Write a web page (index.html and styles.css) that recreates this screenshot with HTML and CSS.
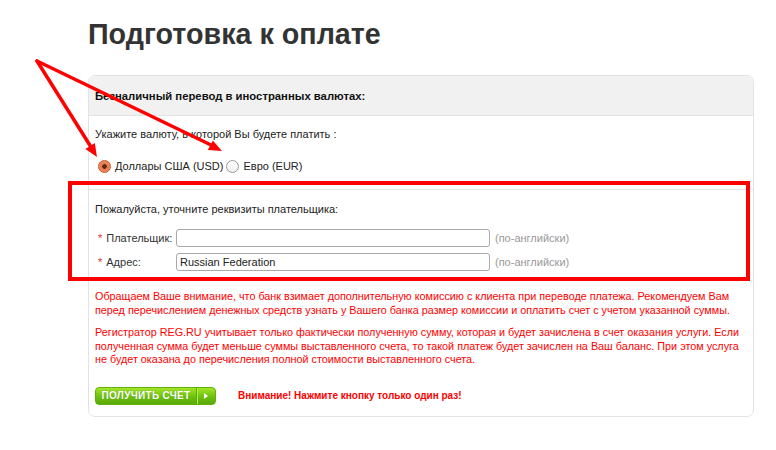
FILE: index.html
```html
<!DOCTYPE html>
<html lang="ru">
<head>
  <meta charset="UTF-8">
  <title>Подготовка к оплате</title>
  <link rel="stylesheet" href="styles.css">
</head>
<body>
  <div class="page">
    <h1 class="title">Подготовка к оплате</h1>

    <div class="panel">
      <div class="panel-head">Безналичный перевод в иностранных валютах:</div>

      <div class="section currency">
        <p class="line">Укажите валюту, в которой Вы будете платить :</p>
        <div class="radios">
          <label class="radio"><span class="dot checked"></span>Доллары США (USD)</label>
          <label class="radio"><span class="dot"></span>Евро (EUR)</label>
        </div>
      </div>

      <div class="section payer">
        <p class="line">Пожалуйста, уточните реквизиты плательщика:</p>
        <div class="fields">
          <label class="field-label"><span class="req">*</span>Плательщик:</label>
          <input class="field" type="text" value="">
          <span class="hint">(по-английски)</span>

          <label class="field-label"><span class="req">*</span>Адрес:</label>
          <input class="field" type="text" value="Russian Federation">
          <span class="hint">(по-английски)</span>
        </div>

        <p class="notice">Обращаем Ваше внимание, что банк взимает дополнительную комиссию с клиента при переводе платежа. Рекомендуем Вам перед перечислением денежных средств узнать у Вашего банка размер комиссии и оплатить счет с учетом указанной суммы.</p>
        <p class="notice">Регистратор REG.RU учитывает только фактически полученную сумму, которая и будет зачислена в счет оказания услуги. Если полученная сумма будет меньше суммы выставленного счета, то такой платеж будет зачислен на Ваш баланс. При этом услуга не будет оказана до перечисления полной стоимости выставленного счета.</p>

        <div class="actions">
          <button class="btn-green" type="button"><span class="btn-text">ПОЛУЧИТЬ СЧЕТ</span><span class="btn-arrow"></span></button>
          <span class="warn">Внимание! Нажмите кнопку только один раз!</span>
        </div>
      </div>
    </div>

    <!-- пометки поверх скриншота -->
    <div class="mark-box"></div>
    <svg class="marks" width="776" height="450" viewBox="0 0 776 450">
      <g stroke="#f00" stroke-width="3.5" stroke-linecap="round" fill="none">
        <line x1="37" y1="61" x2="91" y2="147"/>
        <line x1="37" y1="61" x2="211" y2="145"/>
      </g>
      <g fill="#f00">
        <polygon points="97,157 94.8,143 85.4,148.9"/>
        <polygon points="222,151 212.8,140.5 207.8,150.1"/>
      </g>
    </svg>
  </div>
</body>
</html>
```

FILE: styles.css
```css
body { margin: 0; font-family: "Liberation Sans", Arial, sans-serif; font-size: 11px; color: #222; background: #fff; }
.page { position: relative; width: 776px; height: 450px; padding-left: 88px; box-sizing: border-box; overflow: hidden; }

.title { margin: 0; padding-top: 16px; height: 75px; box-sizing: border-box; font-size: 28.7px; line-height: 36px; font-weight: bold; color: #333; }

.panel { width: 666px; border: 1px solid #e3e3e3; border-radius: 7px; box-sizing: border-box; }
.panel-head { height: 40px; line-height: 40px; padding-left: 6px; background: #f1f1f1; border-bottom: 1px solid #e3e3e3; border-radius: 7px 7px 0 0; font-weight: bold; font-size: 11.3px; color: #111; box-sizing: border-box; }

.section { padding: 0 6px; }
.line { margin: 0; line-height: 16px; }

.currency { padding-top: 10px; padding-bottom: 15px; border-bottom: 1px solid #e5e5e5; }
.radios { display: flex; margin-top: 16px; line-height: 16px; }
.radio { display: flex; align-items: center; }
.dot { width: 11px; height: 11px; margin: 0 4px 0 3px; border: 1px solid #999; border-radius: 50%; background: linear-gradient(#fff, #eee); }
.dot.checked { border-color: #c9532a; background: radial-gradient(circle, #5a2a15 0 2px, #e8774c 2.5px, #f29a72 100%); }

.payer { padding-top: 11px; padding-bottom: 11px; }
.fields { display: grid; grid-template-columns: 81px 314px auto; row-gap: 6px; margin-top: 12px; align-items: center; }
.field-label { color: #333; padding-left: 3px; }
.req { color: #e03030; margin-right: 4px; }
.field { height: 18px; box-sizing: border-box; border: 1px solid #aaa; border-radius: 3px; padding: 0 3px; font: 11px "Liberation Sans", Arial, sans-serif; color: #222; }
.hint { color: #999; padding-left: 5px; }

.notice { margin: 18px 0 0; font-size: 10.8px; line-height: 14px; color: #f00; width: 650px; }
.notice + .notice { margin-top: 9px; line-height: 13.5px; }

.actions { display: flex; align-items: center; margin-top: 20px; }
.btn-green { display: flex; align-items: stretch; height: 18px; width: 121px; padding: 0; border: 1px solid #62b10a; border-radius: 4px; background: linear-gradient(#a4e52a, #6cc00c 55%, #5aa90a); color: #fff; font: bold 10px "Liberation Sans", Arial, sans-serif; box-sizing: border-box; cursor: pointer; }
.btn-text { flex: 1; line-height: 16px; text-align: center; text-shadow: 0 0 1px #4f8f08; border-right: 1px solid #5aa90a; box-shadow: 1px 0 0 #b4ef4c; letter-spacing: 0.3px; }
.btn-arrow { width: 18px; position: relative; }
.btn-arrow::after { content: ""; position: absolute; left: 7px; top: 5px; border-left: 4px solid #fff; border-top: 3px solid transparent; border-bottom: 3px solid transparent; }
.warn { margin-left: 22px; color: #f00; font-weight: bold; font-size: 10px; }

.mark-box { position: absolute; left: 68px; top: 181px; width: 682px; height: 100px; border: 4px solid #f00; box-sizing: border-box; }
.marks { position: absolute; left: 0; top: 0; pointer-events: none; }
```
